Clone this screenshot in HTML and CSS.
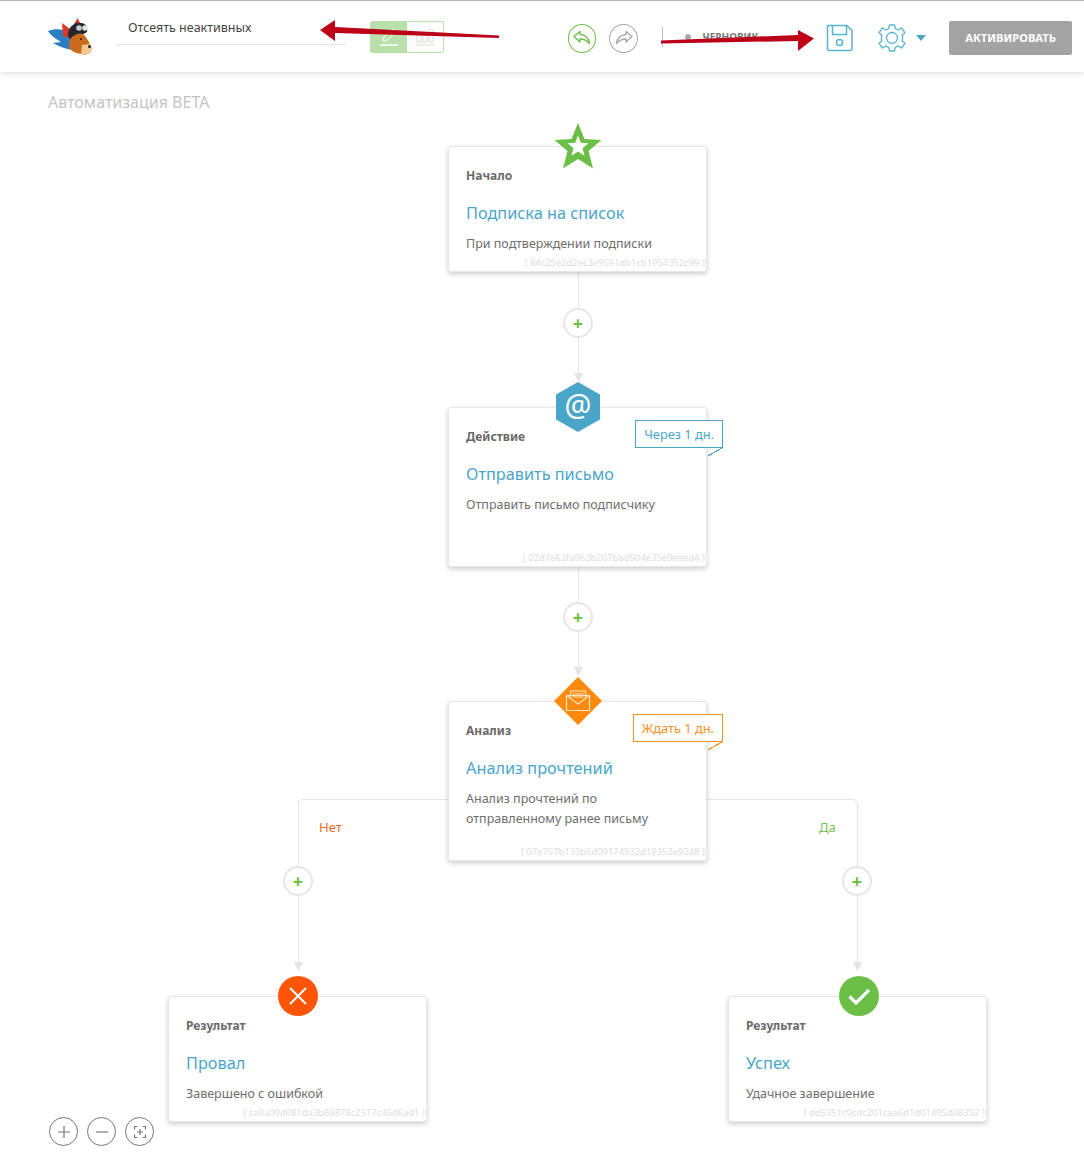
FILE: index.html
```html
<!DOCTYPE html>
<html lang="en">
<head>
  <meta charset="UTF-8">
  <meta name="viewport" content="width=device-width, initial-scale=1.0">
  <title>Автоматизация</title>
  <link rel="stylesheet" href="styles.css">
</head>
<body>
  <header class="topbar">
    <svg class="logo" width="44" height="40" viewBox="0 0 44 40">
      <path d="M0 14 C7 11 15 12 21 15 L27 33 C20 33 12 30 5 26 L13 25 C8 22 3 19 0 14Z" fill="#2a7fc4"/>
      <path d="M15 19 L14 6 L22 12 L24 22Z" fill="#d8392f"/>
      <path d="M25 9 L29.500 1 L33 8Z" fill="#d8392f"/>
      <path d="M20 18 C20 10 27 5 33 6 C38 6 40 11 39 15 L27 22 C23 23 20 21 20 18Z" fill="#26272b"/>
      <path d="M21 26 C22 19 30 15 35 17 C38 20 41 24 42 28 C44 30 44 33 42.500 35 C40 38 36 38 33 37 C26 36 20 33 21 26Z" fill="#c96a1d"/>
      <path d="M34 28 L42 27 C44 30 44 33 42.500 35 C40 38 36 38 33 37Z" fill="#f1c78f"/>
      <circle cx="31" cy="11" r="2.800" fill="#c9ced2"/>
      <circle cx="37" cy="11" r="2.800" fill="#e1e4e6"/>
      <circle cx="33" cy="22" r="1" fill="#222"/>
      <circle cx="41.500" cy="29.500" r="1.500" fill="#222"/>
    </svg>
    <div class="name-field">Отсеять неактивных</div>
    <div class="mode-toggle">
      <span class="mode mode-active">
        <svg width="22" height="22" viewBox="0 0 22 22" fill="none" stroke="#fff" stroke-width="1"><path d="M5 15 L6 11 L15 3 L18 6 L9 14Z"/><path d="M2 19 H20" stroke-width="1.5"/></svg>
      </span>
      <span class="mode">
        <svg width="22" height="22" viewBox="0 0 22 22" fill="none" stroke="#d6ddd2" stroke-width="1"><path d="M3 8h4v8H3zM9 8h4v8H9zM15 4h4v12h-4z"/><path d="M1 19 H21"/></svg>
      </span>
    </div>
    <button class="round-btn undo">
      <svg width="18" height="16" viewBox="0 0 18 16" fill="none" stroke="#6fbf4b" stroke-width="1.4" stroke-linejoin="round"><path d="M1 6.500 L7 1.500 V4.500 C12 4.500 16 8 16.500 13.500 C14 10.500 11 9 7 9 V12Z"/></svg>
    </button>
    <button class="round-btn redo">
      <svg width="18" height="16" viewBox="0 0 18 16" fill="none" stroke="#a8a8a8" stroke-width="1.4" stroke-linejoin="round"><path d="M17 6.500 L11 1.500 V4.500 C6 4.500 2 8 1.500 13.500 C4 10.500 7 9 11 9 V12Z"/></svg>
    </button>
    <div class="state"><i class="state-dot"></i>ЧЕРНОВИК</div>
    <svg class="save" width="28" height="28" viewBox="0 0 28 28" fill="none" stroke="#58b3d3" stroke-width="1.500">
      <path d="M2.500 1.500 H21 L26 6.500 V25 a1.500 1.500 0 0 1 -1.500 1.500 H3 a1.500 1.500 0 0 1 -1.500 -1.500 V2.500 a1 1 0 0 1 1 -1Z"/>
      <path d="M6.500 1.500 V10.500 H20.500 V1.500"/>
      <circle cx="13.500" cy="18.500" r="3"/>
    </svg>
    <svg class="gear" width="28" height="28" viewBox="0 0 28 28" fill="none" stroke="#58b3d3" stroke-width="1.300" stroke-linejoin="round">
      <path d="M11.500 1 H16.500 L17.300 4.700 L20.300 6 L23.500 4 L27 8.700 L24.300 11 L24.600 14 L24.300 17 L27 19.300 L23.500 24 L20.300 22 L17.300 23.300 L16.500 27 H11.500 L10.700 23.300 L7.700 22 L4.500 24 L1 19.300 L3.700 17 L3.400 14 L3.700 11 L1 8.700 L4.500 4 L7.700 6 L10.700 4.700Z"/>
      <circle cx="14" cy="14" r="5.500"/>
    </svg>
    <i class="caret"></i>
    <button class="activate">АКТИВИРОВАТЬ</button>
  </header>

  <main class="canvas">
    <h1 class="page-title">Автоматизация BETA</h1>

    <svg class="edges" width="1084" height="1087" viewBox="0 0 1084 1087" fill="none" stroke="#e4e4e4">
      <path d="M578.500 199 V305"/>
      <path d="M578.500 494 V600"/>
      <path d="M448 727.500 H304 a5 5 0 0 0 -5.500 5.500 V893"/>
      <path d="M707 727.500 H852 a5 5 0 0 1 5.500 5.500 V893"/>
      <g fill="#e4e4e4" stroke="none">
        <path d="M574 301 H583 L578.500 310Z"/>
        <path d="M574 595 H583 L578.500 604Z"/>
        <path d="M294 890 H303 L298.500 899Z"/>
        <path d="M853 890 H862 L857.500 899Z"/>
      </g>
    </svg>

    <button class="add add-1">+</button>
    <button class="add add-2">+</button>
    <button class="add add-3">+</button>
    <button class="add add-4">+</button>

    <span class="branch branch-no">Нет</span>
    <span class="branch branch-yes">Да</span>

    <section class="node node-start">
      <svg class="node-icon icon-star" width="48" height="46" viewBox="0 0 48 46">
        <path d="M24 0 L30.500 16 L47.500 17 L34.500 28 L39 45.500 L24 36 L9 45.500 L13.500 28 L0.500 17 L17.500 16Z" fill="#6cbf46"/>
        <path d="M24 12.500 L26.800 19.800 L34.500 20.200 L28.500 25.200 L30.500 32.800 L24 28.500 L17.500 32.800 L19.500 25.200 L13.500 20.200 L21.200 19.800Z" fill="#fff"/>
      </svg>
      <h3 class="node-type">Начало</h3>
      <h2 class="node-title">Подписка на список</h2>
      <p class="node-desc">При подтверждении подписки</p>
      <span class="node-hash">[ 84c25e2d2ec3e9591db1cb1954352c99 ]</span>
    </section>

    <section class="node node-action">
      <div class="node-icon icon-hex">@</div>
      <h3 class="node-type">Действие</h3>
      <h2 class="node-title">Отправить письмо</h2>
      <p class="node-desc">Отправить письмо подписчику</p>
      <div class="delay delay-blue">Через 1 дн.</div>
      <span class="node-hash">[ 02d7e62fa963b207bbd904e35e9eaed4 ]</span>
    </section>

    <section class="node node-analysis">
      <svg class="node-icon icon-diamond" width="48" height="48" viewBox="0 0 48 48" fill="none">
        <path d="M24 0 L48 24 L24 48 L0 24Z" fill="#ff8a0c"/>
        <g stroke="#fde3c0" stroke-width="1.200">
          <path d="M12.500 18.500 H35.500 V33.500 H12.500Z"/>
          <path d="M12.500 18.500 L24 27 L35.500 18.500"/>
          <path d="M16.500 21 V14 H31.500 V21"/>
          <path d="M18.500 17 H29.500 M18.500 20 H29.500"/>
        </g>
      </svg>
      <h3 class="node-type">Анализ</h3>
      <h2 class="node-title">Анализ прочтений</h2>
      <p class="node-desc">Анализ прочтений по<br>отправленному ранее письму</p>
      <div class="delay delay-orange">Ждать 1 дн.</div>
      <span class="node-hash">[ 07e757b133b6d09174932d19352e9248 ]</span>
    </section>

    <section class="node node-fail">
      <svg class="node-icon icon-round" width="40" height="40" viewBox="0 0 40 40" fill="none">
        <circle cx="20" cy="20" r="20" fill="#ff5508"/>
        <path d="M12 12 L28 28 M28 12 L12 28" stroke="#fff" stroke-width="2"/>
      </svg>
      <h3 class="node-type">Результат</h3>
      <h2 class="node-title">Провал</h2>
      <p class="node-desc">Завершено с ошибкой</p>
      <span class="node-hash">[ ca0a09d081da3b69878c2517c45d6ad1 ]</span>
    </section>

    <section class="node node-ok">
      <svg class="node-icon icon-round" width="40" height="40" viewBox="0 0 40 40" fill="none">
        <circle cx="20" cy="20" r="20" fill="#6cbf46"/>
        <path d="M10.500 20.500 L17 27 L30 14" stroke="#fff" stroke-width="3.200"/>
      </svg>
      <h3 class="node-type">Результат</h3>
      <h2 class="node-title">Успех</h2>
      <p class="node-desc">Удачное завершение</p>
      <span class="node-hash">[ dd5351c9cdc201caa6d1d01495d08392 ]</span>
    </section>

    <div class="zoom-tools">
      <button class="zoom-btn">
        <svg width="16" height="16" viewBox="0 0 16 16" stroke="#777" stroke-width="1.200"><path d="M8 2 V14 M2 8 H14"/></svg>
      </button>
      <button class="zoom-btn">
        <svg width="16" height="16" viewBox="0 0 16 16" stroke="#777" stroke-width="1.200"><path d="M2 8 H14"/></svg>
      </button>
      <button class="zoom-btn">
        <svg width="16" height="16" viewBox="0 0 16 16" fill="none" stroke="#777" stroke-width="1.200"><path d="M2.500 5.500 V2.500 H5.500 M10.500 2.500 H13.500 V5.500 M13.500 10.500 V13.500 H10.500 M5.500 13.500 H2.500 V10.500 M8 5 V11 M5 8 H11"/></svg>
      </button>
    </div>
  </main>

  <!-- red annotation arrows drawn over the screenshot -->
  <svg class="marks" width="1084" height="72" viewBox="0 0 1084 72">
    <path d="M499 35.500 L335 27 L335 20 L320 30 L335 41 L335 33 L499 38Z" fill="#bb0018"/>
    <path d="M661 40.500 L798 35 L798 30 L814 38.500 L798 51 L798 41 L661 43.500Z" fill="#bb0018"/>
  </svg>
</body>
</html>
```

FILE: styles.css
```css
* { box-sizing: border-box; }
html, body { margin: 0; padding: 0; }
body {
  position: relative;
  width: 1084px;
  height: 1159px;
  overflow: hidden;
  background: #fff;
  font-family: "Noto Sans", sans-serif;
  color: #666;
}
button {
  font-family: inherit;
  padding: 0;
  background: none;
  border: none;
}

/* top bar */
.topbar {
  display: flex;
  align-items: center;
  height: 72px;
  padding: 0 12px 0 48px;
  border-top: 1px solid #b8b8b8;
  background: #fff;
  box-shadow: 0 1px 6px rgba(0,0,0,0.15);
  position: relative;
  z-index: 2;
}
.logo { flex: none; }
.name-field {
  width: 230px;
  height: 29px;
  margin: -12px 0 0 24px;
  padding: 4px 12px 0;
  border-bottom: 1px solid #e4e4e4;
  font-size: 12.500px;
  line-height: 16px;
  color: #444;
}
.mode-toggle {
  display: flex;
  width: 74px;
  height: 32px;
  margin: 1px 0 0 24px;
  border: 1px solid #b9e0a8;
  border-radius: 2px;
}
.mode {
  flex: 1;
  display: flex;
  align-items: center;
  justify-content: center;
}
.mode-active { background: #b9e0a8; }
.round-btn {
  width: 29px;
  height: 29px;
  display: flex;
  align-items: center;
  justify-content: center;
  border-radius: 50%;
  border: 1.500px solid #a8a8a8;
  margin-top: 3px;
}
.undo { margin-left: 124px; border-color: #6fbf4b; }
.redo { margin-left: 13px; }
.state {
  display: flex;
  align-items: center;
  width: 154px;
  height: 20px;
  margin: 0 0 0 24px;
  padding-left: 22px;
  border-left: 1px solid #bbb;
  font-size: 10px;
  font-weight: 700;
  color: #777;
}
.state-dot {
  width: 6px;
  height: 6px;
  margin-right: 11px;
  border-radius: 50%;
  background: #aaa;
}
.save { flex: none; margin: 3px 0 0 10px; }
.gear { flex: none; margin: 3px 0 0 24px; }
.caret {
  margin: 2px 0 0 10px;
  border-left: 5px solid transparent;
  border-right: 5px solid transparent;
  border-top: 6px solid #4aa6c9;
}
.activate {
  width: 123px;
  height: 34px;
  margin: 2px 0 0 23px;
  border-radius: 2px;
  background: #a3a3a3;
  color: #fff;
  font-size: 11.200px;
  font-weight: 700;
}

/* diagram */
.canvas {
  position: relative;
  height: 1087px;
}
.page-title {
  margin: 0;
  padding: 19px 0 0 48px;
  font-size: 16px;
  line-height: 22px;
  font-weight: 400;
  color: #c4c4c4;
}
.edges {
  position: absolute;
  left: 0;
  top: 0;
}
.add {
  position: absolute;
  width: 30px;
  height: 30px;
  border-radius: 50%;
  border: 2px solid #e6e6e6;
  background: #fff;
  color: #6cbf46;
  font-size: 18px;
  font-weight: 700;
  line-height: 24px;
  text-align: center;
}
.add-1 { left: 563px; top: 236px; }
.add-2 { left: 563px; top: 530px; }
.add-3 { left: 283px; top: 794px; }
.add-4 { left: 842px; top: 794px; }
.branch {
  position: absolute;
  top: 746px;
  font-size: 13px;
  line-height: 18px;
}
.branch-no { left: 319px; color: #f0692a; }
.branch-yes { left: 819px; color: #76c257; }

.node {
  position: absolute;
  width: 259px;
  padding: 20px 17px 0;
  background: #fff;
  border: 1px solid #e8e8e8;
  border-radius: 3px;
  box-shadow: 0 2px 5px rgba(0,0,0,0.2);
}
.node-start { left: 448px; top: 74px; height: 126px; }
.node-action { left: 448px; top: 335px; height: 160px; }
.node-analysis { left: 448px; top: 629px; height: 160px; }
.node-fail { left: 168px; top: 924px; height: 126px; }
.node-ok { left: 728px; top: 924px; height: 126px; }
.node-type {
  margin: 0;
  font-size: 12px;
  line-height: 18px;
  font-weight: 700;
  color: #6a6a6a;
}
.node-title {
  margin: 16px 0 0;
  font-size: 16.300px;
  line-height: 24px;
  font-weight: 400;
  color: #4aa6c9;
}
.node-desc {
  margin: 9px 0 0;
  font-size: 12.500px;
  line-height: 20px;
  color: #6e6e6e;
}
.node-hash {
  position: absolute;
  right: 1px;
  bottom: 1px;
  font-size: 9.400px;
  line-height: 14px;
  color: #dedede;
  white-space: nowrap;
}
.node-icon { position: absolute; }
.icon-star { left: 105px; top: -24px; }
.icon-hex {
  left: 107px;
  top: -26px;
  width: 44px;
  height: 50px;
  clip-path: polygon(50% 0, 100% 25%, 100% 75%, 50% 100%, 0 75%, 0 25%);
  background: #4aa6c9;
  color: #fff;
  font-size: 30px;
  line-height: 46px;
  text-align: center;
}
.icon-diamond { left: 105px; top: -25px; }
.icon-round { left: 110px; top: -21px; }
.node-fail .icon-round { left: 109px; }

.delay {
  position: absolute;
  right: -17px;
  top: 12px;
  height: 28px;
  padding: 0 8px;
  border: 1px solid;
  background: #fff;
  font-size: 12.800px;
  line-height: 26px;
}
.delay::after {
  content: "";
  position: absolute;
  right: -1px;
  top: 26px;
  width: 16px;
  height: 9px;
  background: linear-gradient(to bottom right, transparent 49%, currentColor 49%, currentColor 56%, transparent 56%);
}
.delay-blue { color: #4aa6c9; border-color: #4aa6c9; }
.delay-orange { color: #f5921e; border-color: #f5921e; }

.zoom-tools {
  position: absolute;
  left: 49px;
  top: 1045px;
  display: flex;
  gap: 9px;
}
.zoom-btn {
  width: 29px;
  height: 29px;
  display: flex;
  align-items: center;
  justify-content: center;
  border-radius: 50%;
  border: 1.500px solid #777;
}

.marks {
  position: absolute;
  left: 0;
  top: 0;
  z-index: 3;
  pointer-events: none;
}
```
